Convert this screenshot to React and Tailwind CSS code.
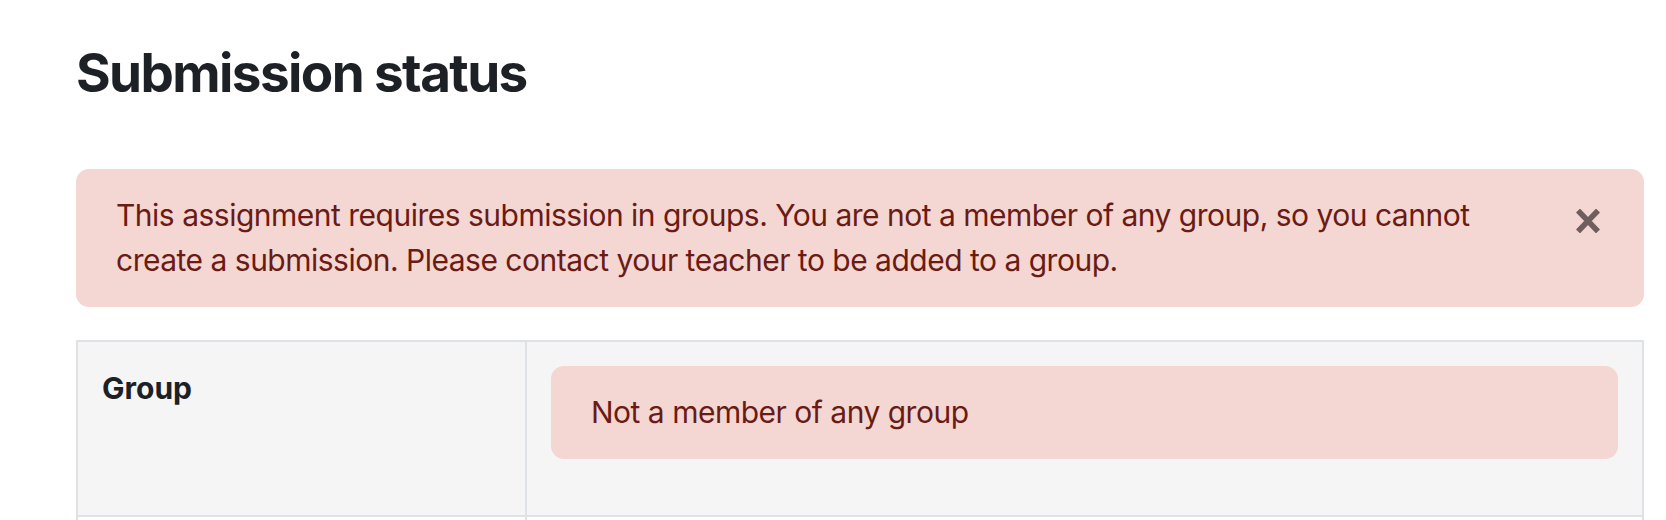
export default function App() {
  return (
    <div className="w-[1666px] h-[520px] overflow-hidden bg-white pl-[76px] pr-[22px]" style={{ fontFamily: "Inter, 'Noto Sans', sans-serif" }}>
      <h2 className="pt-[41px] text-[53px] leading-[64px] font-bold text-[#1d2125] tracking-[-1.6px]">Submission status</h2>
      <div className="relative mt-[64px] rounded-[13px] bg-[#f4d6d3] pl-[40px] pr-[125px] py-[24px] text-[30px] leading-[45px] text-[#6a1b13] tracking-[-0.5px]">
        <p>This assignment requires submission in groups. You are not a member of any group, so you cannot create a submission. Please contact your teacher to be added to a group.</p>
        <button className="absolute right-[43px] top-[40px] w-[26px] h-[24px] flex items-center justify-center" aria-label="Close">
          <svg width="26" height="24" viewBox="0 0 26 24">
            <path d="M3 1.5 L23 22.5 M23 1.5 L3 22.5" stroke="#6e5e5e" strokeWidth="5.5" />
          </svg>
        </button>
      </div>
      <div className="mt-[33px] border-t-2 border-x-2 border-[#dee2e6]">
        <div className="flex bg-[#f5f5f5] border-b-2 border-[#dee2e6]">
          <div className="w-[449px] shrink-0 border-r-2 border-[#dee2e6] p-[24px] text-[30px] leading-[45px] font-bold text-[#1d2125]">Group</div>
          <div className="flex-1 p-[24px]">
            <div className="mb-[32px] rounded-[13px] bg-[#f4d6d3] px-[40px] py-[24px] text-[30px] leading-[45px] text-[#6a1b13] tracking-[-0.5px]">Not a member of any group</div>
          </div>
        </div>
        <div className="flex h-[40px]">
          <div className="w-[449px] shrink-0 border-r-2 border-[#dee2e6]"></div>
          <div className="flex-1"></div>
        </div>
      </div>
    </div>
  );
}
